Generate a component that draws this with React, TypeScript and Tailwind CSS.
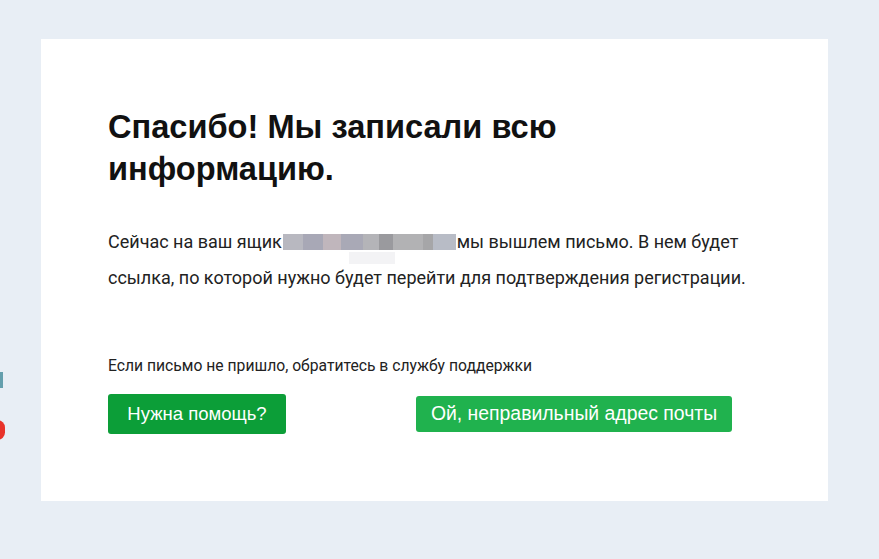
export default function App() {
  return (
    <div className="relative min-h-[559px] w-[879px] overflow-hidden bg-[#e8eef5] pt-[39px] pl-[41px]" style={{ fontFamily: '"Liberation Sans", Arial, sans-serif' }}>
      <div className="absolute left-0 top-[372px] h-[16px] w-[3px] bg-[#2c7d8f] opacity-70" />
      <div className="absolute left-[-10px] top-[420px] h-[20px] w-[15px] rounded-full bg-[#e8322a]" />
      <div className="flex h-[462px] w-[787px] flex-col bg-white pl-[67px] pt-[67px]">
        <h1 className="text-[32.6px] font-bold leading-[42px] text-[#111]">
          Спасибо! Мы записали всю<br />информацию.
        </h1>
        <div className="mt-[34px] text-[18px] leading-[36px] text-[#222]" style={{ fontFamily: 'Roboto, "Liberation Sans", sans-serif' }}>
          <div className="flex items-center">
            <span>Сейчас на ваш ящик</span>
            <span className="relative mx-[1px] inline-block h-[16px] w-[173px]">
              <span className="absolute inset-0 flex">
                <span className="h-full w-[20px] bg-[#b8b8c0]" />
                <span className="h-full w-[20px] bg-[#a8a8b6]" />
                <span className="h-full w-[18px] bg-[#c0b6bc]" />
                <span className="h-full w-[22px] bg-[#a9a9b6]" />
                <span className="h-full w-[16px] bg-[#b4b4b8]" />
                <span className="h-full w-[14px] bg-[#9a9a9e]" />
                <span className="h-full w-[30px] bg-[#b2b2b4]" />
                <span className="h-full w-[10px] bg-[#a6a6a8]" />
                <span className="h-full w-[23px] bg-[#b8bcc6]" />
              </span>
              <span className="absolute left-[66px] top-[18px] h-[12px] w-[46px] bg-[#f3f3f5]" />
            </span>
            <span>мы вышлем письмо. В нем будет</span>
          </div>
          <div>ссылка, по которой нужно будет перейти для подтверждения регистрации.</div>
        </div>
        <p className="mt-[60px] text-[15.7px] leading-[20px] text-[#222]" style={{ fontFamily: 'Roboto, "Liberation Sans", sans-serif' }}>Если письмо не пришло, обратитесь в службу поддержки</p>
        <div className="mt-[18px] flex items-center">
          <button className="h-[40px] w-[178px] rounded-[3px] bg-[#0c9e38] text-[18.5px] text-white">Нужна помощь?</button>
          <button className="ml-[130px] h-[36px] w-[316px] rounded-[3px] bg-[#20b24e] text-[19.4px] text-white">Ой, неправильный адрес почты</button>
        </div>
      </div>
    </div>
  );
}
